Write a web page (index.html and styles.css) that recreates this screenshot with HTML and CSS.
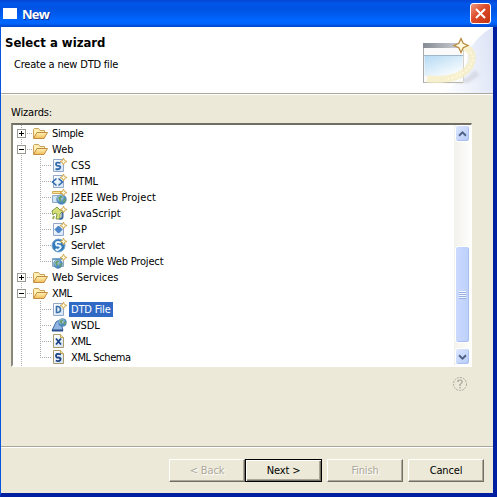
FILE: index.html
```html
<!DOCTYPE html>
<html lang="en">
<head>
<meta charset="utf-8">
<title>New</title>
<link rel="stylesheet" href="styles.css">
</head>
<body>
<svg class="defs" width="0" height="0">
  <defs>
    <linearGradient id="gold" x2="0" y2="1"><stop stop-color="#fff3b8"/><stop offset="1" stop-color="#f0bd58"/></linearGradient>
    <linearGradient id="paper" x2="1" y2="1"><stop stop-color="#fff"/><stop offset="1" stop-color="#cfe2f8"/></linearGradient>
    <radialGradient id="ball" cx=".35" cy=".3"><stop stop-color="#e5f5ff"/><stop offset="1" stop-color="#4a88c4"/></radialGradient>
    <symbol id="folder" viewBox="0 0 16 16"><path d="M1.500 13V4.500l1-1h4l1.500 2h4.500V8" fill="#fff0b5" stroke="#cfa058"/><path d="M1.500 13.500 5 7.500h10.500L12 13.500z" fill="url(#gold)" stroke="#c28a3c"/></symbol>
    <symbol id="spark" viewBox="0 0 16 16"><path d="M12.500 1l1 2.500 2.500 1-2.500 1-1 2.500-1-2.500-2.500-1 2.500-1z" fill="#fffbe0" stroke="#d0a040" stroke-width=".9"/></symbol>
    <symbol id="page" viewBox="0 0 16 16"><path d="M2.500 2.500h10v12h-10z" fill="url(#paper)" stroke="#93a9c6"/></symbol>
    <symbol id="doc" viewBox="0 0 16 16"><path d="M2.500 1.500h7l3 3v10h-10z" fill="url(#paper)" stroke="#a99b68"/><path d="M9.500 1.500v3h3" fill="#f7e5aa" stroke="#c9a552"/></symbol>
    <symbol id="globe" viewBox="0 0 16 16"><circle cx="8" cy="8" r="7" fill="url(#ball)" stroke="#5684ad"/><path d="M3 5l4-3 3 2-3 3 1 3-2 2-2-4zm8 2l3-1v4l-3 3-1-3z" fill="#66a06b"/></symbol>
  </defs>
</svg>
<div class="window">
  <header class="titlebar">
    <span class="app-icon"></span><span class="title">New</span>
    <span class="close"><svg width="21" height="21" viewBox="0 0 21 21"><path d="M5.500 5.500l10 10M15.500 5.500l-10 10" stroke="#fff" stroke-width="2.200"/></svg></span>
  </header>
  <section class="banner">
    <div class="copy"><h1>Select a wizard</h1><p>Create a new DTD file</p></div>
    <svg class="art" width="90" height="66" viewBox="0 0 90 66">
      <defs>
        <linearGradient id="haze" x1="0" x2="1" y1=".6" y2=".4"><stop stop-color="#fff"/><stop offset=".45" stop-color="#f1f4fc"/><stop offset="1" stop-color="#dfe5f7"/></linearGradient>
        <linearGradient id="sky" x2=".7" y2="1"><stop stop-color="#b5daf3"/><stop offset="1" stop-color="#fafdff"/></linearGradient>
        <linearGradient id="bar" x2="1"><stop stop-color="#858b94"/><stop offset="1" stop-color="#d3d5d8"/></linearGradient>
        <filter id="soft"><feGaussianBlur stdDeviation="1.500"/></filter>
      </defs>
      <path d="M90 0v66H34Q62 60 65 26 73 9 90 0z" fill="url(#haze)"/>
      <path d="M22 54l42-3 8-8 5 5-12 8z" fill="#cdd0dc" opacity=".7" filter="url(#soft)"/>
      <path d="M20.500 16.500h40v39h-40z" fill="#fafafa" stroke="#d2d3d0"/>
      <path d="M20 16h40v5H20z" fill="url(#bar)"/>
      <path d="M21.500 29h38v20h-38z" fill="url(#sky)"/><path d="M20.500 21v35" stroke="#aaa"/><path d="M21 28.500h39" stroke="#a0b6ca"/>
      <path d="M20 55.500h40" stroke="#b6b6aa"/>
      <path d="M60 19Q74 25 67 39 56 55 24 52" fill="none" stroke="#f6eec4" stroke-width="7" opacity=".8"/>
      <path d="M67 25Q73 31 66 41 57 50 44 52" fill="none" stroke="#fff9dc" stroke-width="2" stroke-dasharray="2 2"/>
      <path d="M58 11.500l2.200 4.800 4.800 2.200-4.800 2.200L58 25.500l-2.200-4.800-4.800-2.200 4.800-2.200z" fill="#fffbe0" stroke="#b78b42" stroke-width="1.300"/>
    </svg>
  </section>
  <main class="content">
    <div class="label">Wizards:</div>
    <div class="treebox">
      <ul class="tree">
        <li><div class="node"><span class="expander plus"></span><svg class="icon"><use href="#folder"/></svg><span class="text narrow">Simple</span></div></li>
        <li><div class="node"><span class="expander"></span><svg class="icon"><use href="#folder"/></svg><span class="text">Web</span></div>
          <ul class="children">
            <li><svg class="icon" viewBox="0 0 16 16"><use href="#page"/><path d="M9.500 6Q5 4.800 5 7t2.500 1.800Q10 9 9 11t-4.500.800" fill="none" stroke="#336cac" stroke-width="1.800"/><use href="#spark"/></svg><span class="text">CSS</span></li>
            <li><svg class="icon" viewBox="0 0 16 16"><use href="#page"/><path d="M5.500 5.500l-4 3.500 4 3.500M7.500 5.500l4 3.500-4 3.500" fill="none" stroke="#2d66aa" stroke-width="1.500"/><use href="#spark"/></svg><span class="text snug">HTML</span></li>
            <li><svg class="icon" viewBox="0 0 16 16"><path d="M1.500 2.500h10v2h-10z" fill="#f7e9a5" stroke="#d0a84d"/><path d="M1.500 6.500h8v7h-8z" fill="#d0e3f4" stroke="#88a9c6"/><use href="#globe" x="5" y="5" width="11" height="11"/><use href="#spark" y="-1"/></svg><span class="text wide">J2EE Web Project</span></li>
            <li><svg class="icon" viewBox="0 0 16 16"><path d="M1 6l5-4 3 3 3 1-3 3v5H5l1-5-2-1-2 2z" fill="#d7df79" stroke="#82984a"/><path d="M11.500 7v5q0 2-3 2" fill="none" stroke="#416b9c" stroke-width="2"/><path d="M3 11l-1 3" stroke="#a0ad57" stroke-width="2"/><use href="#spark"/></svg><span class="text">JavaScript</span></li>
            <li><svg class="icon" viewBox="0 0 16 16"><use href="#page"/><path d="M7.500 5l3.500 3.500L7.500 12 4 8.500z" fill="#4c87cc" stroke="#3f78bb"/><use href="#spark"/></svg><span class="text wider">JSP</span></li>
            <li><svg class="icon" viewBox="0 0 16 16"><circle cx="7.500" cy="8.500" r="6.500" fill="#347bb9" stroke="#79a8d0"/><path d="M10 5.500Q5 4 5 6.500t2.500 2Q11 9 9 11.500t-4.500.500" fill="none" stroke="#e8f7ff" stroke-width="2"/><use href="#spark"/></svg><span class="text snug">Servlet</span></li>
            <li class="last"><svg class="icon" viewBox="0 0 16 16"><path d="M1.500 5.500h11v8h-11z" fill="#dce9f4" stroke="#8ca6be"/><path d="M2 5h9v2H2z" fill="#75a4cf"/><use href="#globe" x="2" y="6" width="10" height="10"/><use href="#spark"/></svg><span class="text snug">Simple Web Project</span></li>
          </ul></li>
        <li><div class="node"><span class="expander plus"></span><svg class="icon"><use href="#folder"/></svg><span class="text">Web Services</span></div></li>
        <li><div class="node"><span class="expander"></span><svg class="icon"><use href="#folder"/></svg><span class="text narrow">XML</span></div>
          <ul class="children">
            <li><svg class="icon" viewBox="0 0 16 16"><use href="#page"/><path d="M5.500 5.500v6h1Q9.500 11.500 9.500 8.500t-3-3z" fill="none" stroke="#3b70a8" stroke-width="1.600"/><use href="#spark"/></svg><span class="text snug selected">DTD File</span></li>
            <li><svg class="icon" viewBox="0 0 16 16"><path d="M1 13.500L5 5q3-3 5 1l2 7.500z" fill="#8fb5e0" stroke="#426eaa"/><path d="M1 13.500h11" stroke="#294d8d" stroke-width="2"/><use href="#globe" x="7" y="1" width="9" height="9"/></svg><span class="text snug">WSDL</span></li>
            <li><svg class="icon" viewBox="0 0 16 16"><use href="#doc"/><path d="M5 5.500l5 6M10 5.500l-5 6" stroke="#1c4282" stroke-width="1.800"/></svg><span class="text narrow">XML</span></li>
            <li class="last"><svg class="icon" viewBox="0 0 16 16"><use href="#doc"/><path d="M10 5.500Q5 4 5 6.500t2.500 2Q10.500 9 9.300 11t-4.500.500" fill="none" stroke="#1c4282" stroke-width="1.800"/></svg><span class="text narrow">XML Schema</span></li>
          </ul></li>
      </ul>
      <div class="scrollbar">
        <span class="arrow"><svg width="15" height="16" viewBox="0 0 15 16"><path d="M3.500 10L7.500 6l4 4" fill="none" stroke="#4d6185" stroke-width="2.200"/></svg></span>
        <span class="track"></span>
        <span class="thumb"><i></i></span>
        <span class="arrow"><svg width="15" height="16" viewBox="0 0 15 16"><path d="M3.500 6l4 4 4-4" fill="none" stroke="#4d6185" stroke-width="2.200"/></svg></span>
      </div>
    </div>
    <div class="help"><svg width="16" height="16" viewBox="0 0 16 16"><circle cx="8" cy="8" r="6.500" fill="none" stroke="#aaa99d" stroke-dasharray="2 1"/><path d="M5.800 6q0-2 2.200-2t2.200 2Q10 7 8 8.500V10M8 11v1.500" fill="none" stroke="#a19f94" stroke-width="1.200"/></svg></div>
  </main>
  <footer class="actions">
    <span class="btn disabled">&lt; Back</span><span class="btn default">Next &gt;</span><span class="btn disabled finish">Finish</span><span class="btn cancel">Cancel</span>
  </footer>
</div>
</body>
</html>
```
FILE: styles.css
```css
* { box-sizing: border-box; }
body { margin: 0; overflow: hidden; font: 11px/16px "DejaVu Sans Condensed", "DejaVu Sans", sans-serif; font-stretch: condensed; color: #000; }
ul { list-style: none; margin: 0; padding: 0; }
.defs { position: absolute; }
.window { width: 497px; height: 497px; background: #ece9d8; border: solid #0831d9; border-width: 0 4px 4px 1px; border-color: #0831d9 #001ea0 #001ea0 #0855dd; display: flex; flex-direction: column; }
.titlebar { flex: none; height: 27px; margin: 0 -4px 0 -1px; padding: 0 6px 0 3px; display: flex; align-items: center; background: linear-gradient(#0645d0 0, #0055e8 3px, #0054e3 10px, #0065ff 20px, #0066ff 23px, #0046c8 27px); }
.app-icon { width: 14px; height: 11px; background: #fff; margin-right: 5px; margin-top: -1px; }
.title { font: bold 13px/20px "Open Sans", sans-serif; color: #fff; text-shadow: 1px 1px #0a2a8a; flex: 1; letter-spacing: -.7px; padding-top: 1px; }
.close { width: 21px; height: 21px; border: 1px solid #fff; border-radius: 3px; background: linear-gradient(135deg, #f09a80, #dc4a28 45%, #c43512); display: flex; align-items: center; justify-content: center; }
.banner { flex: none; height: 67px; background: #fff; border-bottom: 1px solid #aca899; display: flex; justify-content: space-between; }
.copy { padding: 7px 0 0 4px; white-space: nowrap; }
h1 { margin: 0; font: bold 13px/17px "DejaVu Sans Condensed", "DejaVu Sans", sans-serif; font-stretch: condensed; letter-spacing: 0; }
p { margin: 6px 0 0 9px; letter-spacing: -.2px; }
.content { flex: 1; border-top: 1px solid #fff; padding: 9px 21px 0 10px; }
.label { height: 19px; line-height: 17px; letter-spacing: -.15px; }
.treebox { width: 461px; height: 244px; background: #fff; border: solid; border-width: 2px 1px 2px 2px; border-color: #716f64 #fff #fff #8a877b; display: flex; justify-content: space-between; }
.tree { width: 400px; height: 241px; padding-left: 4px; background: repeating-linear-gradient(#aaa 0 1px, #fff 1px 2px) 8px 0 / 1px 100% no-repeat; }
.node, .children li { height: 16px; display: flex; align-items: center; white-space: nowrap; }
.expander { width: 9px; height: 9px; border: 1px solid #9a9a93; background: linear-gradient(#000, #000) center / 5px 1px no-repeat #fff; }
.expander.plus { background: linear-gradient(#000, #000) center / 5px 1px no-repeat, linear-gradient(#000, #000) center / 1px 5px no-repeat #fff; }
.expander::after { content: ""; display: block; width: 6px; height: 1px; margin: 3px 0 0 9px; background: repeating-linear-gradient(90deg, #aaa 0 1px, #fff 1px 2px); }
.icon { width: 16px; height: 16px; flex: none; }
.node .icon { margin-left: 6px; }
.text { padding: 0 2px; line-height: 15px; }
.node .text { margin-left: 2px; }
.children { margin-left: 23px; background: repeating-linear-gradient(#aaa 0 1px, #fff 1px 2px) 0 0 / 1px calc(100% - 8px) no-repeat; }
.children li::before { content: ""; width: 11px; height: 1px; background: repeating-linear-gradient(90deg, #aaa 0 1px, #fff 1px 2px); }
.children .text { margin-left: 2px; }
.text.narrow { letter-spacing: -.4px; }
.text.snug { letter-spacing: -.17px; }
.text.wide { letter-spacing: .1px; }
.text.wider { letter-spacing: .4px; }
.text.selected { background: #316ac5; color: #fff; }
.scrollbar { width: 17px; height: 240px; padding: 0 1px; background: linear-gradient(90deg, #f3f1ec, #fefefb); display: flex; flex-direction: column; }
.arrow, .thumb { border: 1px solid #fff; border-radius: 3px; background: linear-gradient(135deg, #dce6ff, #b6cbf8); box-shadow: inset -1px -1px #a9bfed; display: flex; align-items: center; justify-content: center; }
.arrow { height: 17px; }
.track { flex: 1; }
.thumb { height: 97px; margin-bottom: 5px; background: linear-gradient(90deg, #cad9ff, #bdd0fb); }
.thumb i { width: 7px; height: 8px; background: repeating-linear-gradient(#f5f8ff 0 1px, #94aee4 1px 2px); }
.help { display: flex; justify-content: flex-end; margin: 9px 4px 0 0; }
.actions { flex: none; height: 47px; border-top: 1px solid #aca899; box-shadow: inset 0 1px #fff; padding: 12px 9px 0 0; display: flex; justify-content: flex-end; }
.btn { width: 76px; height: 23px; border: 1px solid; border-color: #fff #716f64 #716f64 #fff; box-shadow: inset -1px -1px #aca899; text-align: center; line-height: 21px; letter-spacing: -.15px; }
.btn.disabled { color: #aca899; text-shadow: 1px 1px #fff; }
.btn.default { width: 77px; border-color: #000; box-shadow: inset 1px 1px #fff, inset -1px -1px #716f64, inset -2px -2px #aca899; }
.btn.finish { margin-left: 5px; }
.btn.cancel { margin-left: 5px; }
```
